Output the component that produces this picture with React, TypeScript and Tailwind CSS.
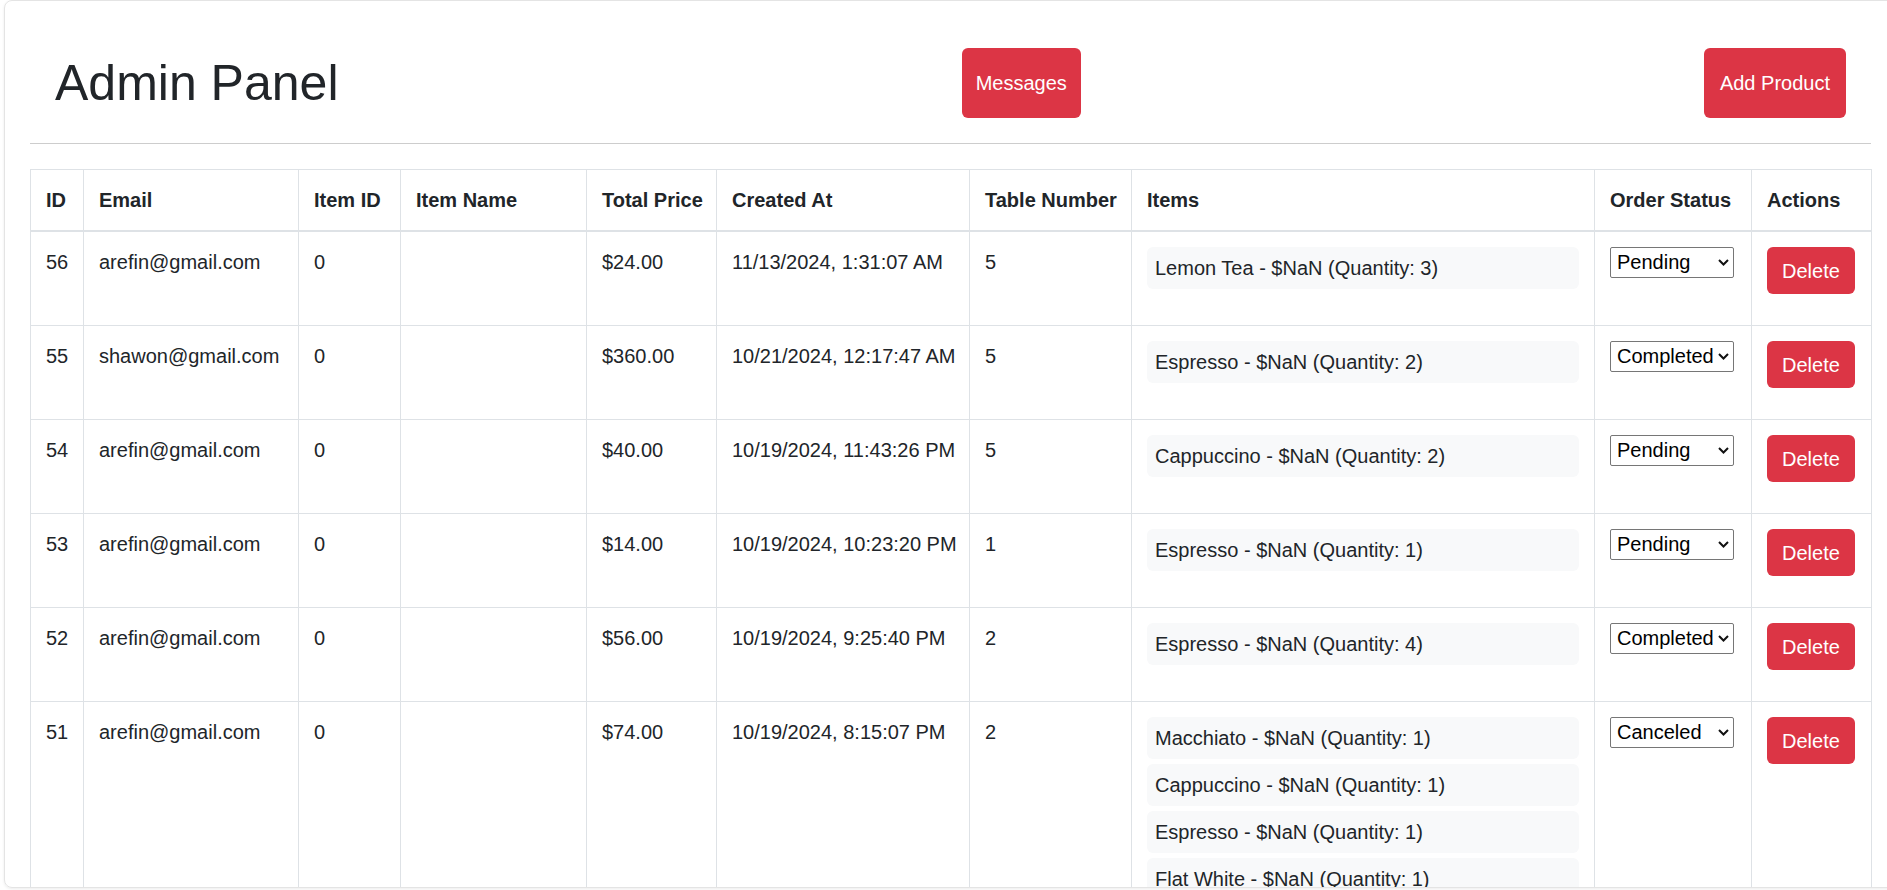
import React from 'react';

type Order = {
  id: number;
  email: string;
  itemId: number;
  total: string;
  createdAt: string;
  table: number;
  items: string[];
  status: string;
};

const orders: Order[] = [
  { id: 56, email: 'arefin@gmail.com', itemId: 0, total: '$24.00', createdAt: '11/13/2024, 1:31:07 AM', table: 5, items: ['Lemon Tea - $NaN (Quantity: 3)'], status: 'Pending' },
  { id: 55, email: 'shawon@gmail.com', itemId: 0, total: '$360.00', createdAt: '10/21/2024, 12:17:47 AM', table: 5, items: ['Espresso - $NaN (Quantity: 2)'], status: 'Completed' },
  { id: 54, email: 'arefin@gmail.com', itemId: 0, total: '$40.00', createdAt: '10/19/2024, 11:43:26 PM', table: 5, items: ['Cappuccino - $NaN (Quantity: 2)'], status: 'Pending' },
  { id: 53, email: 'arefin@gmail.com', itemId: 0, total: '$14.00', createdAt: '10/19/2024, 10:23:20 PM', table: 1, items: ['Espresso - $NaN (Quantity: 1)'], status: 'Pending' },
  { id: 52, email: 'arefin@gmail.com', itemId: 0, total: '$56.00', createdAt: '10/19/2024, 9:25:40 PM', table: 2, items: ['Espresso - $NaN (Quantity: 4)'], status: 'Completed' },
  {
    id: 51, email: 'arefin@gmail.com', itemId: 0, total: '$74.00', createdAt: '10/19/2024, 8:15:07 PM', table: 2,
    items: ['Macchiato - $NaN (Quantity: 1)', 'Cappuccino - $NaN (Quantity: 1)', 'Espresso - $NaN (Quantity: 1)', 'Flat White - $NaN (Quantity: 1)'],
    status: 'Canceled',
  },
];

const headers = ['ID', 'Email', 'Item ID', 'Item Name', 'Total Price', 'Created At', 'Table Number', 'Items', 'Order Status', 'Actions'];
const widths = [53, 215, 102, 186, 130, 253, 162, 463, 157, 120];

function StatusSelect({ value }: { value: string }) {
  return (
    <div className="relative w-[124px]">
      <select
        defaultValue={value}
        className="block h-[31px] w-[124px] appearance-none rounded-[2px] border border-[#767676] bg-white pl-[6px] pr-[18px] text-[20px] leading-[29px] text-black"
      >
        <option>Pending</option>
        <option>Completed</option>
        <option>Canceled</option>
      </select>
      <svg className="pointer-events-none absolute right-[5px] top-[12px]" width="11" height="7" viewBox="0 0 11 7" fill="none">
        <path d="M1 1l4.5 4.5L10 1" stroke="#111" strokeWidth="2" />
      </svg>
    </div>
  );
}

export default function App() {
  return (
    <div className="h-[890px] overflow-hidden bg-white text-[#212529]" style={{ fontFamily: '"Liberation Sans", Arial, sans-serif' }}>
      <div className="ml-[4px] h-[888px] w-[1893px] overflow-hidden rounded-[8px] border border-[#e4e4e4] px-[25px] shadow-[0_1px_3px_rgba(0,0,0,0.08)]">
        {/* Header */}
        <div className="flex items-center justify-between px-[25px] pt-[47px]">
          <h1 className="text-[50px] font-medium leading-[60px]">Admin Panel</h1>
          <button className="h-[70px] rounded-[6px] bg-[#dc3545] px-[14px] text-[20px] text-white">Messages</button>
          <button className="h-[70px] rounded-[6px] bg-[#dc3545] px-[16px] text-[20px] text-white">Add Product</button>
        </div>
        <hr className="mt-[25px] border-t border-[#cdcdcd]" />

        {/* Orders table */}
        <table className="mt-[25px] w-[1841px] table-fixed border-collapse text-[20px] leading-[30px]">
          <colgroup>
            {widths.map((w, i) => (
              <col key={i} style={{ width: w }} />
            ))}
          </colgroup>
          <thead>
            <tr className="border-b-2 border-[#dee2e6]">
              {headers.map((h) => (
                <th key={h} className="border border-[#dee2e6] px-[15px] py-[15px] text-left font-bold whitespace-nowrap">
                  {h}
                </th>
              ))}
            </tr>
          </thead>
          <tbody>
            {orders.map((o) => (
              <tr key={o.id}>
                <td className="border border-[#dee2e6] p-[15px] align-top">{o.id}</td>
                <td className="border border-[#dee2e6] p-[15px] align-top">{o.email}</td>
                <td className="border border-[#dee2e6] p-[15px] align-top">{o.itemId}</td>
                <td className="border border-[#dee2e6] p-[15px] align-top"></td>
                <td className="border border-[#dee2e6] p-[15px] align-top">{o.total}</td>
                <td className="border border-[#dee2e6] p-[15px] align-top whitespace-nowrap">{o.createdAt}</td>
                <td className="border border-[#dee2e6] p-[15px] align-top">{o.table}</td>
                <td className="border border-[#dee2e6] p-[15px] align-top">
                  <ul className="mb-[21px]">
                    {o.items.map((it, i) => (
                      <li key={i} className="mb-[5px] rounded-[6px] bg-[#f8f9fa] px-[8px] py-[6px]">
                        {it}
                      </li>
                    ))}
                  </ul>
                </td>
                <td className="border border-[#dee2e6] p-[15px] align-top">
                  <StatusSelect value={o.status} />
                </td>
                <td className="border border-[#dee2e6] p-[15px] align-top">
                  <button className="h-[47px] rounded-[6px] bg-[#dc3545] px-[15px] text-[20px] text-white">Delete</button>
                </td>
              </tr>
            ))}
          </tbody>
        </table>
      </div>
    </div>
  );
}
